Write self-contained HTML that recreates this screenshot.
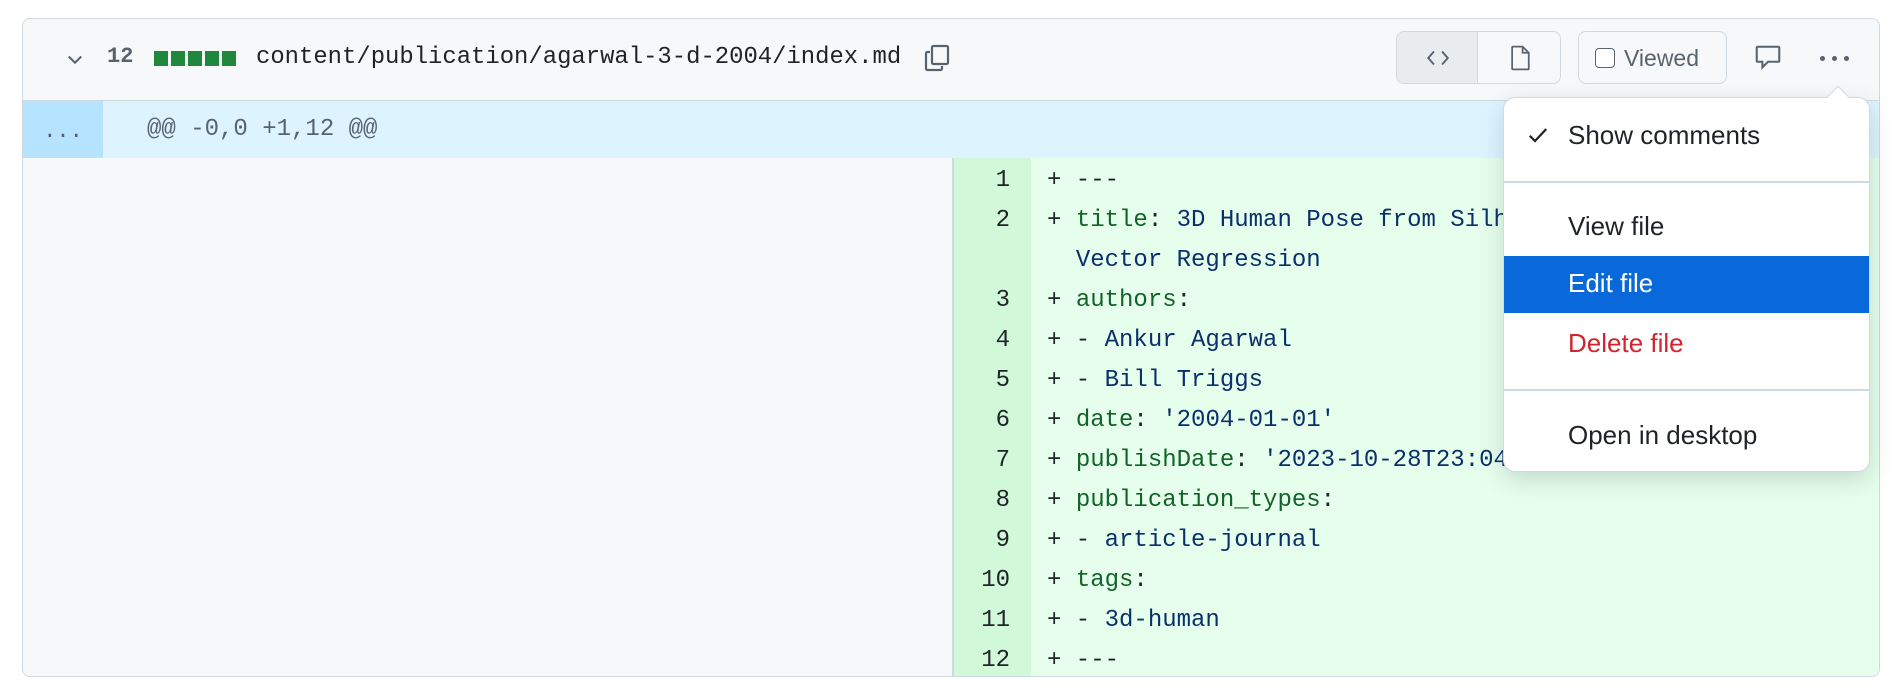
<!DOCTYPE html>
<html><head><meta charset="utf-8"><style>
*{box-sizing:border-box;margin:0;padding:0}
body{width:1904px;height:696px;background:#fff;position:relative;overflow:hidden;font-family:"Liberation Sans",sans-serif}
.card{position:absolute;left:22px;top:18px;width:1858px;height:659px;border:1.5px solid #d1d9e0;border-radius:8px;overflow:hidden;background:#f6f8fa}
.hdr{position:absolute;left:0;top:0;right:0;height:82px;background:#f6f8fa;border-bottom:1.5px solid #d1d9e0}
.mono{font-family:"Liberation Mono",monospace}
.abs{position:absolute}
.hunk{position:absolute;left:0;right:0;top:82px;height:57px;background:#ddf4ff}
.hunknum{position:absolute;left:0;top:0;width:80px;height:57px;background:#b6e3ff;color:#59636e;font-size:22px;text-align:center;line-height:62px}
.num{position:absolute;left:930px;width:78px;top:139px;bottom:0;background:#d1f8d9}
.code{position:absolute;left:1008px;right:0;top:139px;bottom:0;background:#e6ffec}
.row{position:absolute;font-family:"Liberation Mono",monospace;font-size:24px;line-height:40px;white-space:pre}
.ln{left:950px;width:60px;text-align:right;color:#1f2328}
.tx{left:1047px;color:#1f2328}
.k{color:#116329}.v{color:#0a3069}
.menu{position:absolute;left:1503px;top:97px;width:367px;height:375px;background:#fff;border:1px solid #d1d9e0;border-radius:12px;box-shadow:0 8px 24px rgba(66,74,83,.2)}
.mi{position:absolute;left:64px;font-size:26px;color:#1f2328}
.sep{position:absolute;left:0;right:0;height:1.5px;background:#d1d9e0}
</style></head><body>
<div class="card">
 <div class="hdr">
  <svg class="abs" style="left:42px;top:30px" width="20" height="20" viewBox="0 0 16 16"><path d="M3 6l5 5 5-5" fill="none" stroke="#59636e" stroke-width="1.6"/></svg>
  <div class="abs mono" style="left:84px;top:25px;font-size:22px;font-weight:bold;color:#59636e">12</div>
  <div class="abs" style="left:131px;top:32px;display:flex;gap:3px">
   <i style="width:14px;height:15px;background:#1f883d"></i><i style="width:14px;height:15px;background:#1f883d"></i><i style="width:14px;height:15px;background:#1f883d"></i><i style="width:14px;height:15px;background:#1f883d"></i><i style="width:14px;height:15px;background:#1f883d"></i>
  </div>
  <div class="abs mono" style="left:233px;top:25px;font-size:23.9px;color:#1f2328">content/publication/agarwal-3-d-2004/index.md</div>
  <svg class="abs" style="left:898px;top:23px" width="32" height="32" viewBox="0 0 16 16"><path d="M4.5 5H3.2c-.4 0-.7.3-.7.7v7.6c0 .4.3.7.7.7h6.6c.4 0 .7-.3.7-.7V12M6.2 2h6.6c.4 0 .7.3.7.7v7.6c0 .4-.3.7-.7.7H6.2c-.4 0-.7-.3-.7-.7V2.7c0-.4.3-.7.7-.7z" fill="none" stroke="#59636e" stroke-width="1.1"/></svg>
  <div class="abs" style="left:1373px;top:12px;width:165px;height:53px;border:1.5px solid #d1d9e0;border-radius:8px;background:#f6f8fa;overflow:hidden">
   <div class="abs" style="left:0;top:0;width:81px;height:51px;background:#e9ecef;border-right:1.5px solid #d1d9e0"></div>
   <svg class="abs" style="left:28px;top:13px" width="26" height="26" viewBox="0 0 16 16"><path d="M5.5 4L2 8l3.5 4M10.5 4L14 8l-3.5 4" fill="none" stroke="#59636e" stroke-width="1.2"/></svg>
   <svg class="abs" style="left:109px;top:11px" width="28" height="30" viewBox="0 0 16 16"><path d="M4 1.5h5.5L13 5v9.2c0 .2-.1.3-.3.3H4c-.3 0-.5-.2-.5-.5V2c0-.3.2-.5.5-.5zM9.5 1.5V5H13" fill="none" stroke="#59636e" stroke-width="1"/></svg>
  </div>
  <div class="abs" style="left:1555px;top:12px;width:149px;height:53px;border:1.5px solid #d1d9e0;border-radius:8px;background:#f6f8fa">
   <div class="abs" style="left:16px;top:16px;width:20px;height:20px;border:1.5px solid #59636e;border-radius:4px;background:#fff"></div>
   <div class="abs" style="left:45px;top:13px;font-size:23px;color:#59636e">Viewed</div>
  </div>
  <svg class="abs" style="left:1730px;top:24px" width="30" height="30" viewBox="0 0 16 16"><path d="M2.5 2h11c.3 0 .5.2.5.5v7c0 .3-.2.5-.5.5H8l-3 3v-3H2.5c-.3 0-.5-.2-.5-.5v-7c0-.3.2-.5.5-.5z" fill="none" stroke="#59636e" stroke-width="1.1"/></svg>
  <div class="abs" style="left:1797px;top:37px;display:flex;gap:7px"><i style="width:5px;height:5px;border-radius:50%;background:#59636e"></i><i style="width:5px;height:5px;border-radius:50%;background:#59636e"></i><i style="width:5px;height:5px;border-radius:50%;background:#59636e"></i></div>
 </div>
 <div class="hunk"><div class="hunknum mono">...</div><div class="abs mono" style="left:124px;top:15px;font-size:24px;color:#59636e">@@ -0,0 +1,12 @@</div></div>
 <div class="num"></div><div class="code"></div>
 <div class="abs" style="left:929px;top:139px;bottom:0;width:1.5px;background:#d1d9e0"></div>
</div>
<div style="position:absolute;left:0;top:22px">
<div class="row ln" style="top:139px">1</div><div class="row tx" style="top:139px">+ ---</div>
<div class="row ln" style="top:179px">2</div><div class="row tx" style="top:179px">+ <span class="k">title</span>: <span class="v">3D Human Pose from Silhouettes by Relevance</span></div>
<div class="row tx" style="top:219px">  <span class="v">Vector Regression</span></div>
<div class="row ln" style="top:259px">3</div><div class="row tx" style="top:259px">+ <span class="k">authors</span>:</div>
<div class="row ln" style="top:299px">4</div><div class="row tx" style="top:299px">+ - <span class="v">Ankur Agarwal</span></div>
<div class="row ln" style="top:339px">5</div><div class="row tx" style="top:339px">+ - <span class="v">Bill Triggs</span></div>
<div class="row ln" style="top:379px">6</div><div class="row tx" style="top:379px">+ <span class="k">date</span>: <span class="v">'2004-01-01'</span></div>
<div class="row ln" style="top:419px">7</div><div class="row tx" style="top:419px">+ <span class="k">publishDate</span>: <span class="v">'2023-10-28T23:04:00'</span></div>
<div class="row ln" style="top:459px">8</div><div class="row tx" style="top:459px">+ <span class="k">publication_types</span>:</div>
<div class="row ln" style="top:499px">9</div><div class="row tx" style="top:499px">+ - <span class="v">article-journal</span></div>
<div class="row ln" style="top:539px">10</div><div class="row tx" style="top:539px">+ <span class="k">tags</span>:</div>
<div class="row ln" style="top:579px">11</div><div class="row tx" style="top:579px">+ - <span class="v">3d-human</span></div>
<div class="row ln" style="top:619px">12</div><div class="row tx" style="top:619px">+ ---</div>
</div>
<div class="menu">
 <div class="abs" style="left:326px;top:-9px;width:16px;height:16px;background:#fff;border-left:1px solid #d1d9e0;border-top:1px solid #d1d9e0;transform:rotate(45deg)"></div>
 <svg class="abs" style="left:22px;top:25px" width="24" height="24" viewBox="0 0 16 16"><path d="M2.5 8.5l3.5 3.5 7.5-8" fill="none" stroke="#1f2328" stroke-width="1.5"/></svg>
 <div class="mi" style="top:22px">Show comments</div>
 <div class="sep" style="top:83px"></div>
 <div class="mi" style="top:113px">View file</div>
 <div class="abs" style="left:0;right:0;top:158px;height:57px;background:#0969da"></div>
 <div class="mi" style="top:170px;color:#fff">Edit file</div>
 <div class="mi" style="top:230px;color:#d1242f">Delete file</div>
 <div class="sep" style="top:291px"></div>
 <div class="mi" style="top:322px">Open in desktop</div>
</div>
</body></html>
